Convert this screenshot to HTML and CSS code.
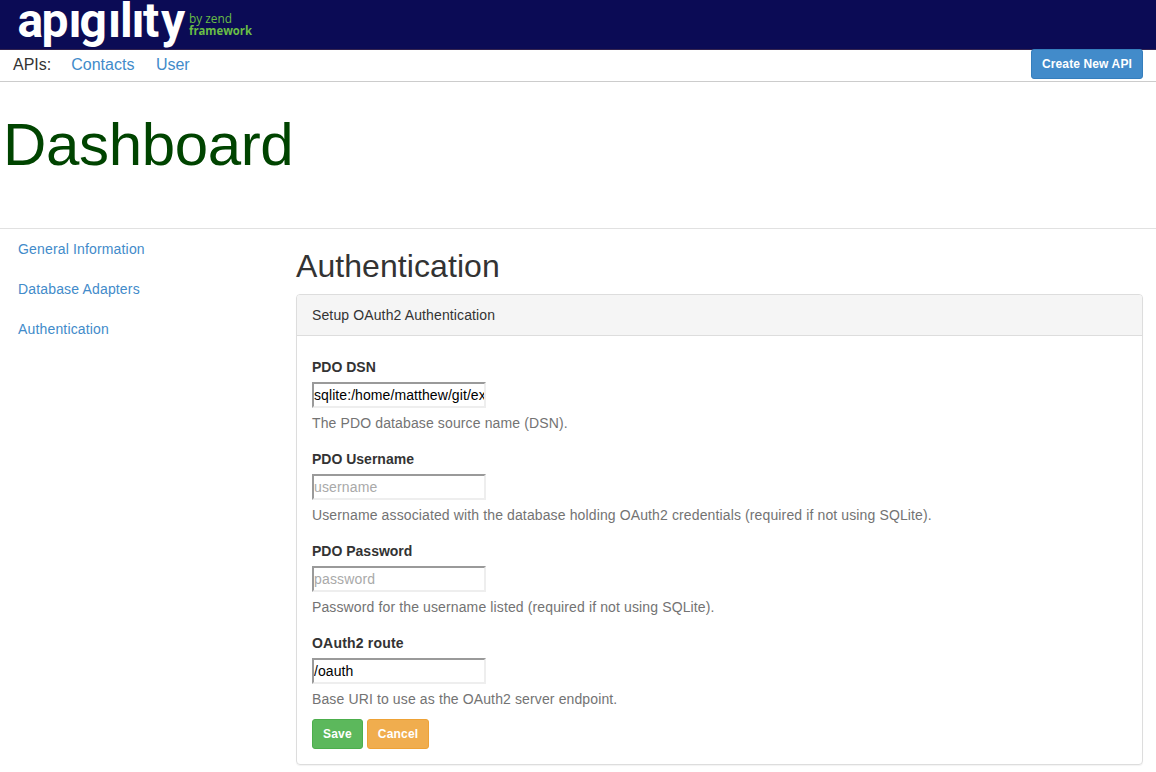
FILE: index.html
```html
<!DOCTYPE html>
<html lang="en">
<head>
<meta charset="utf-8">
<title>Apigility - Dashboard</title>
<link rel="stylesheet" href="styles.css">
</head>
<body>
<header class="masthead">
  <svg class="logo" width="260" height="50" viewBox="0 0 260 50" role="img" aria-label="apigility by zend framework">
    <text class="logo-word" y="36.5" x="17.5 41.5 68.5 79.5 108 120 131.5 143 161">apıgılıty</text>
    <text class="logo-by" x="189" y="23" textLength="43" lengthAdjust="spacingAndGlyphs">by zend</text>
    <text class="logo-fw" x="189" y="35" textLength="63" lengthAdjust="spacingAndGlyphs">framework</text>
  </svg>
</header>
<nav class="api-nav">
  <span class="api-label">APIs:</span>
  <a href="#">Contacts</a>
  <a href="#">User</a>
  <button class="btn btn-primary" type="button">Create New API</button>
</nav>
<div class="page-title"><h1>Dashboard</h1></div>
<div class="layout">
  <aside class="sidebar">
    <a href="#">General Information</a>
    <a href="#">Database Adapters</a>
    <a href="#">Authentication</a>
  </aside>
  <main class="content">
    <h2>Authentication</h2>
    <section class="panel">
      <div class="panel-heading">Setup OAuth2 Authentication</div>
      <form class="panel-body">
        <div class="form-group">
          <label for="dsn">PDO DSN</label>
          <input id="dsn" type="text" value="sqlite:/home/matthew/git/examples/oauth.db">
          <p>The PDO database source name (DSN).</p>
        </div>
        <div class="form-group">
          <label for="username">PDO Username</label>
          <input id="username" type="text" placeholder="username">
          <p>Username associated with the database holding OAuth2 credentials (required if not using SQLite).</p>
        </div>
        <div class="form-group">
          <label for="password">PDO Password</label>
          <input id="password" type="password" placeholder="password">
          <p>Password for the username listed (required if not using SQLite).</p>
        </div>
        <div class="form-group">
          <label class="label-route" for="route">OAuth2 route</label>
          <input id="route" type="text" value="/oauth">
          <p>Base URI to use as the OAuth2 server endpoint.</p>
        </div>
        <div class="actions">
          <button class="btn btn-success" type="button">Save</button>
          <button class="btn btn-warning" type="button">Cancel</button>
        </div>
      </form>
    </section>
  </main>
</div>
</body>
</html>
```
FILE: styles.css
```css
* { box-sizing: border-box; }

body {
  margin: 0;
  height: 772px;
  overflow: hidden;
  background: #fff;
  color: #333;
  font: 14px/20px "Liberation Sans", Arial, sans-serif;
  letter-spacing: .125px;
}

a { color: #428bca; text-decoration: none; }
h1, h2, p { margin: 0; font-weight: 400; }

.masthead {
  height: 50px;
  background: #0b0b55;
  border-bottom: 1px solid #33234f;
}
.logo { display: block; overflow: visible; letter-spacing: 0; }
.logo-word { font: 700 48px Roboto, sans-serif; fill: #fff; }
.logo-by { font: 400 12.5px "Open Sans", sans-serif; fill: #69bd45; }
.logo-fw { font: 700 12.5px "Open Sans", sans-serif; fill: #69bd45; }

.api-nav {
  display: flex;
  align-items: flex-start;
  height: 32px;
  padding: 0 13px;
  border-bottom: 1px solid #ccc;
  font-size: 16px;
  line-height: 29px;
  letter-spacing: 0;
}
.api-label { margin-right: 20px; }
.api-nav a { margin-right: 21.5px; }
.api-nav .btn { margin: -1px 0 0 auto; letter-spacing: .13px; }

.btn {
  height: 30px;
  padding: 5px 10px;
  border: 1px solid;
  border-radius: 3px;
  color: #fff;
  font: bold 12px/18px "Liberation Sans", Arial, sans-serif;
  letter-spacing: .2px;
}
.btn-primary { background: #428bca; border-color: #357ebd; }
.btn-success { background: #5cb85c; border-color: #4cae4c; }
.btn-warning { background: #f0ad4e; border-color: #eea236; }

.page-title {
  height: 147px;
  padding: 30px 0 0 3px;
  border-bottom: 1px solid #e1e1e1;
}
h1 { color: #040; font-size: 60px; line-height: 66px; letter-spacing: -.35px; }

.layout { display: grid; grid-template-columns: 296px 847px; }
.sidebar {
  display: flex;
  flex-direction: column;
  gap: 20px;
  padding: 10px 18px;
  letter-spacing: .16px;
}
.content { padding-top: 19px; }
h2 { font-size: 32px; line-height: 36px; letter-spacing: .07px; }

.panel {
  height: 471px;
  margin-top: 10px;
  border: 1px solid #ddd;
  border-radius: 4px;
  box-shadow: 0 1px 1px rgba(0, 0, 0, .05);
}
.panel-heading {
  padding: 10px 15px;
  border-bottom: 1px solid #ddd;
  border-radius: 3px 3px 0 0;
  background: #f5f5f5;
}
.panel-body { padding: 21px 15px 15px; }
.form-group { margin-bottom: 16px; }
.form-group:nth-last-child(2) { margin-bottom: 10px; }
label { display: block; margin-bottom: 5px; font-weight: 700; letter-spacing: 0; }
.label-route { letter-spacing: .2px; }
input {
  display: block;
  width: 174px;
  height: 26px;
  padding: 0;
  border: 2px solid;
  border-color: #9a9a9a #eee #eee #9a9a9a;
  background: #fff;
  color: #000;
  font: 14px/20px "Liberation Sans", Arial, sans-serif;
  letter-spacing: .08px;
}
input::placeholder { color: #a9a9a9; letter-spacing: .16px; }
.form-group p { margin-top: 5px; color: #737373; }
.actions { display: flex; gap: 4px; }
```
